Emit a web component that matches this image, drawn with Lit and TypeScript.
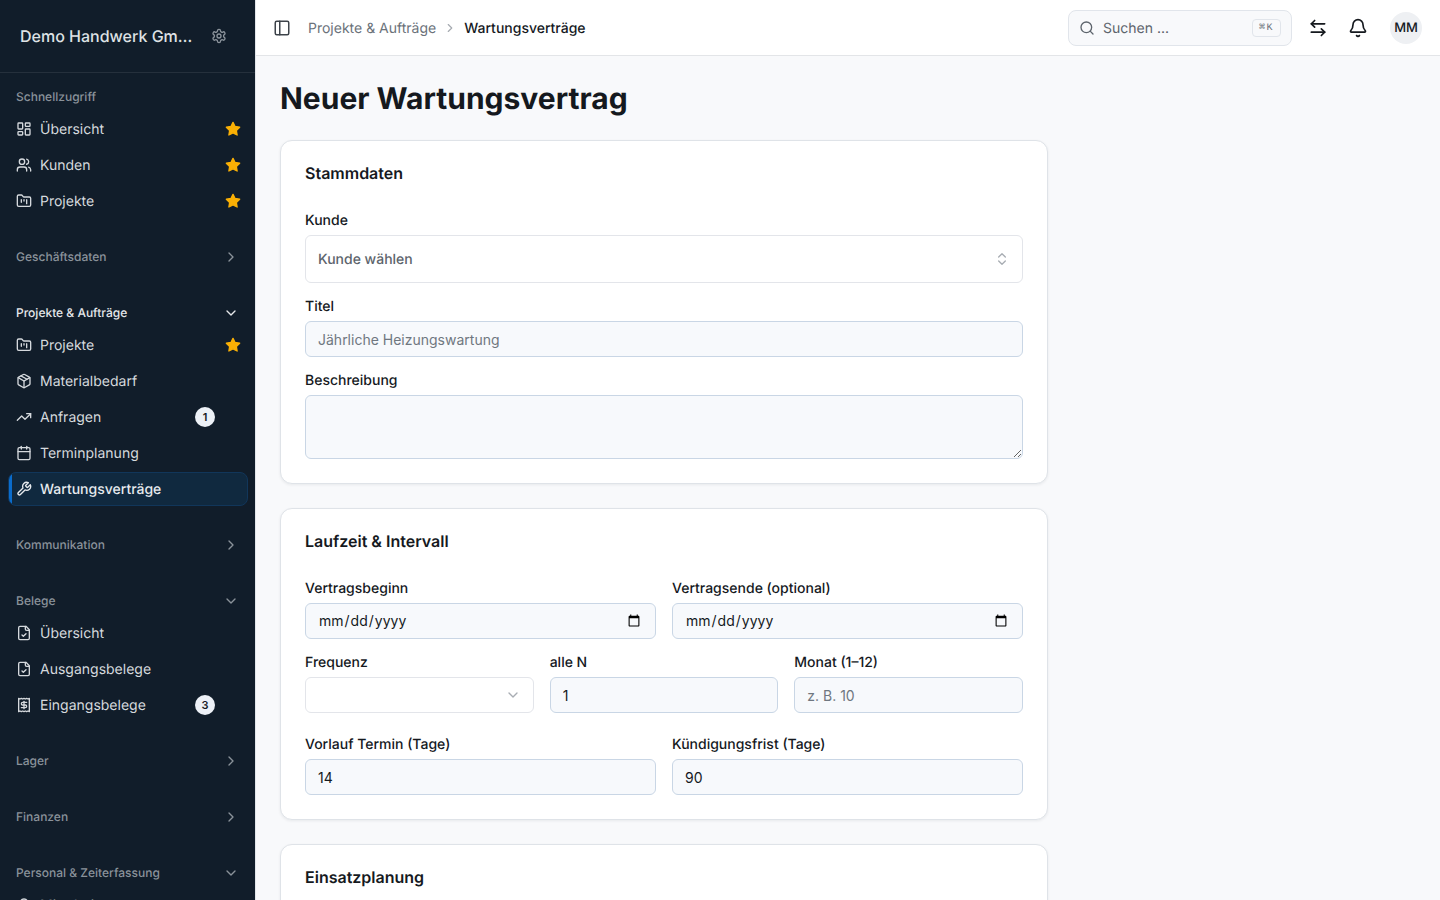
import { LitElement, html, css, svg } from "lit";
import { customElement } from "lit/decorators.js";

const ic: Record<string, unknown> = {
  dash: svg`<rect x="3" y="3" width="7" height="9" rx="1"/><rect x="14" y="3" width="7" height="5" rx="1"/><rect x="14" y="12" width="7" height="9" rx="1"/><rect x="3" y="16" width="7" height="5" rx="1"/>`,
  users: svg`<path d="M16 21v-2a4 4 0 0 0-4-4H6a4 4 0 0 0-4 4v2"/><circle cx="9" cy="7" r="4"/><path d="M22 21v-2a4 4 0 0 0-3-3.87"/><path d="M16 3.13a4 4 0 0 1 0 7.75"/>`,
  folder: svg`<path d="M4 20h16a2 2 0 0 0 2-2V8a2 2 0 0 0-2-2h-7.93a2 2 0 0 1-1.66-.9l-.82-1.2A2 2 0 0 0 7.93 3H4a2 2 0 0 0-2 2v13c0 1.1.9 2 2 2Z"/><path d="M8 10v4"/><path d="M12 10v2"/><path d="M16 10v6"/>`,
  pkg: svg`<path d="m7.5 4.27 9 5.15"/><path d="M21 8a2 2 0 0 0-1-1.73l-7-4a2 2 0 0 0-2 0l-7 4A2 2 0 0 0 3 8v8a2 2 0 0 0 1 1.73l7 4a2 2 0 0 0 2 0l7-4A2 2 0 0 0 21 16Z"/><path d="m3.3 7 8.7 5 8.7-5"/><path d="M12 22V12"/>`,
  trend: svg`<polyline points="22 7 13.5 15.5 8.5 10.5 2 17"/><polyline points="16 7 22 7 22 13"/>`,
  cal: svg`<path d="M8 2v4"/><path d="M16 2v4"/><rect x="3" y="4" width="18" height="18" rx="2"/><path d="M3 10h18"/>`,
  wrench: svg`<path d="M14.7 6.3a1 1 0 0 0 0 1.4l1.6 1.6a1 1 0 0 0 1.4 0l3.77-3.77a6 6 0 0 1-7.94 7.94l-6.91 6.91a2.12 2.12 0 0 1-3-3l6.91-6.91a6 6 0 0 1 7.94-7.94l-3.76 3.76z"/>`,
  filecheck: svg`<path d="M15 2H6a2 2 0 0 0-2 2v16a2 2 0 0 0 2 2h12a2 2 0 0 0 2-2V7Z"/><path d="M14 2v4a2 2 0 0 0 2 2h4"/><path d="m9 15 2 2 4-4"/>`,
  receipt: svg`<path d="M4 2v20l2-1 2 1 2-1 2 1 2-1 2 1 2-1 2 1V2l-2 1-2-1-2 1-2-1-2 1-2-1-2 1Z"/><path d="M16 8h-6a2 2 0 1 0 0 4h4a2 2 0 1 1 0 4H8"/><path d="M12 17.5v-11"/>`,
  gear: svg`<path d="M12.22 2h-.44a2 2 0 0 0-2 2v.18a2 2 0 0 1-1 1.73l-.43.25a2 2 0 0 1-2 0l-.15-.08a2 2 0 0 0-2.73.73l-.22.38a2 2 0 0 0 .73 2.73l.15.1a2 2 0 0 1 1 1.72v.51a2 2 0 0 1-1 1.74l-.15.09a2 2 0 0 0-.73 2.73l.22.38a2 2 0 0 0 2.73.73l.15-.08a2 2 0 0 1 2 0l.43.25a2 2 0 0 1 1 1.73V20a2 2 0 0 0 2 2h.44a2 2 0 0 0 2-2v-.18a2 2 0 0 1 1-1.73l.43-.25a2 2 0 0 1 2 0l.15.08a2 2 0 0 0 2.73-.73l.22-.39a2 2 0 0 0-.73-2.73l-.15-.08a2 2 0 0 1-1-1.74v-.5a2 2 0 0 1 1-1.74l.15-.09a2 2 0 0 0 .73-2.73l-.22-.38a2 2 0 0 0-2.73-.73l-.15.08a2 2 0 0 1-2 0l-.43-.25a2 2 0 0 1-1-1.73V4a2 2 0 0 0-2-2z"/><circle cx="12" cy="12" r="3"/>`,
  panel: svg`<rect x="3" y="3" width="18" height="18" rx="2"/><path d="M9 3v18"/>`,
  search: svg`<circle cx="11" cy="11" r="8"/><path d="m21 21-4.3-4.3"/>`,
  swap: svg`<path d="M8 3 4 7l4 4"/><path d="M4 7h16"/><path d="m16 21 4-4-4-4"/><path d="M20 17H4"/>`,
  bell: svg`<path d="M10.268 21a2 2 0 0 0 3.464 0"/><path d="M3.262 15.326A1 1 0 0 0 4 17h16a1 1 0 0 0 .74-1.673C19.41 13.956 18 12.499 18 8A6 6 0 0 0 6 8c0 4.499-1.411 5.956-2.738 7.326"/>`,
  updown: svg`<path d="m7 15 5 5 5-5"/><path d="m7 9 5-5 5 5"/>`,
  right: svg`<path d="m9 18 6-6-6-6"/>`,
  down: svg`<path d="m6 9 6 6 6-6"/>`,
  star: svg`<polygon points="12 2 15.09 8.26 22 9.27 17 14.14 18.18 21.02 12 17.77 5.82 21.02 7 14.14 2 9.27 8.91 8.26 12 2"/>`,
  userc: svg`<circle cx="12" cy="8" r="5"/><path d="M20 21a8 8 0 0 0-16 0"/>`,
};

const icon = (n: string, size = 16, cls = "", sw = 2) =>
  html`<svg class="i ${cls}" width=${size} height=${size} viewBox="0 0 24 24" fill="none" stroke="currentColor" stroke-width=${sw} stroke-linecap="round" stroke-linejoin="round">${ic[n]}</svg>`;

type Row = { i: string; t: string; star?: boolean; badge?: string; active?: boolean };
type Sec = { t: string; open: boolean; cur?: boolean; noChevron?: boolean; rows?: Row[] };

const sections: Sec[] = [
  { t: "Schnellzugriff", open: true, noChevron: true, rows: [
    { i: "dash", t: "Übersicht", star: true },
    { i: "users", t: "Kunden", star: true },
    { i: "folder", t: "Projekte", star: true },
  ]},
  { t: "Geschäftsdaten", open: false },
  { t: "Projekte & Aufträge", open: true, cur: true, rows: [
    { i: "folder", t: "Projekte", star: true },
    { i: "pkg", t: "Materialbedarf" },
    { i: "trend", t: "Anfragen", badge: "1" },
    { i: "cal", t: "Terminplanung" },
    { i: "wrench", t: "Wartungsverträge", active: true },
  ]},
  { t: "Kommunikation", open: false },
  { t: "Belege", open: true, rows: [
    { i: "filecheck", t: "Übersicht" },
    { i: "filecheck", t: "Ausgangsbelege" },
    { i: "receipt", t: "Eingangsbelege", badge: "3" },
  ]},
  { t: "Lager", open: false },
  { t: "Finanzen", open: false },
  { t: "Personal & Zeiterfassung", open: true, rows: [
    { i: "userc", t: "Mitarbeiter" },
  ]},
];

@customElement("app-root")
export class AppRoot extends LitElement {
  static styles = css`
    :host { display: block; height: 900px; overflow: hidden; font-family: Inter, "Liberation Sans", sans-serif; color: #15191e; text-rendering: geometricPrecision; }
    * { box-sizing: border-box; }
    .i { display: block; flex: none; }
    .shell { display: flex; height: 900px; background: #f8f9fb; }
    .side { width: 256px; flex: none; background: #111d2a; display: flex; flex-direction: column; overflow: hidden; border-right: 1px solid #e3e6ea; }
    .brand { height: 73px; flex: none; display: flex; align-items: center; padding: 0 28px 1px 20px; border-bottom: 1px solid #25303c; gap: 18px; }
    .brand-name { flex: 1; min-width: 0; font-size: 16px; font-weight: 500; color: #dfe2e5; white-space: nowrap; overflow: hidden; text-overflow: ellipsis; }
    .gear { color: #8b939b; }
    .nav { padding: 14px 7px 0 8px; display: flex; flex-direction: column; gap: 28px; }
    .sec { display: flow-root; }
    .sec-head { height: 20px; display: flex; align-items: center; justify-content: space-between; padding: 0 9px 0 8px; font-size: 12px; font-weight: 500; line-height: 20px; color: #8a929a; margin-bottom: 8px; }
    .sec.open .sec-head { margin-bottom: 4px; }
    .sec.cur .sec-head { color: #e6e8ea; }
    .rows { display: flex; flex-direction: column; gap: 2px; padding: 1px 0; }
    .row { height: 34px; display: flex; align-items: center; padding-left: 7px; gap: 8px; border-radius: 8px; font-size: 14px; color: #d5d9dd; border: 1px solid transparent; position: relative; }
    .row .t { flex: 1; }
    .row.active { background: #10293f; border-color: #11365a; color: #e6eaee; overflow: hidden; font-weight: 500; }
    .row.active::before { content: ""; position: absolute; left: -1px; top: -1px; bottom: -1px; width: 4px; background: #0a6ccc; }
    .star { color: #fab005; margin-right: 6px; }
    .badge { width: 20px; height: 20px; border-radius: 50%; background: #edf1f7; color: #15191e; font-size: 11px; font-weight: 600; display: flex; align-items: center; justify-content: center; margin-right: 32px; }
    .main { flex: 1; min-width: 0; display: flex; flex-direction: column; }
    .top { height: 56px; flex: none; background: #fff; border-bottom: 1px solid #e3e5e8; display: flex; align-items: center; padding: 0 18px 0 17px; }
    .top .panel { color: #3d434a; margin-right: 17px; }
    .crumb { font-size: 14px; color: #6b727a; margin-top: 2px; }
    .sep { color: #a6abb1; margin: 0 7px; }
    .crumb-cur { font-size: 14px; font-weight: 500; color: #15191e; margin-top: 2px; }
    .search { margin-left: auto; width: 224px; height: 36px; border: 1px solid #e1e5eb; border-radius: 8px; background: #f8f9fb; display: flex; align-items: center; padding: 0 10px; gap: 8px; color: #5d646c; font-size: 14px; }
    .search .ph { flex: 1; margin-top: 2px; }
    .kbd { width: 29px; height: 18px; border: 1px solid #e1e5eb; border-radius: 4px; font-size: 10px; color: #6b727a; display: flex; align-items: center; justify-content: center; padding-top: 1px; font-family: "Liberation Mono", monospace; letter-spacing: 1.5px; }
    .act { margin-left: 14px; width: 24px; display: flex; justify-content: center; color: #15191e; }
    .act.bell { margin-left: 16px; }
    .avatar { margin-left: 20px; width: 32px; height: 32px; border-radius: 50%; background: #eef0f3; display: flex; align-items: center; justify-content: center; font-size: 13px; font-weight: 500; color: #15191e; }
    .content { padding: 24px; overflow: hidden; flex: 1; }
    h1 { margin: 1px 0 23px; font-size: 30px; line-height: 36px; font-weight: 700; color: #15191e; }
    .card { width: 768px; background: #fff; border: 1px solid #dfe3e8; border-radius: 12px; padding: 24px; margin-bottom: 24px; box-shadow: 0 1px 3px rgba(20, 30, 45, 0.07); }
    h2 { margin: 0 0 28px; font-size: 16px; line-height: 16px; font-weight: 600; color: #15191e; }
    .fields { display: flex; flex-direction: column; gap: 12px; }
    .g2, .g3 { display: grid; gap: 12px 16px; }
    .g2 { grid-template-columns: 1fr 1fr; }
    .g3 { grid-template-columns: 1fr 1fr 1fr; }
    .spaced { margin-top: 8px; }
    label { display: block; font-size: 14px; line-height: 22px; font-weight: 500; margin: 1px 0 3px; color: #15191e; }
    input, textarea, select { display: block; width: 100%; font: inherit; font-size: 14px; color: #15191e; background: #f7f9fc; border: 1px solid #c9d6e5; border-radius: 6px; padding: 0 12px; height: 36px; outline: none; margin: 0; }
    input[type="date"] { padding-bottom: 2px; }
    input::-webkit-calendar-picker-indicator { margin-top: 2px; }
    input::placeholder, textarea::placeholder { color: #6f7780; }
    textarea { height: 64px; padding: 8px 12px; resize: vertical; }
    .wrap { position: relative; }
    .pick { height: 48px; background: #fff; border: 1px solid #e3e5ea; border-radius: 6px; display: flex; align-items: center; justify-content: space-between; padding: 0 12px; font-size: 14px; font-weight: 500; color: #5d646c; }
    .pick .i { color: #a8adb3; }
    select { appearance: none; background: #fff; border-color: #e3e5ea; }
    .wrap .i { position: absolute; right: 13px; top: 10px; color: #a8adb3; pointer-events: none; }
  `;

  render() {
    return html`<div class="shell">
      <aside class="side">
        <div class="brand"><div class="brand-name">Demo Handwerk GmbH</div><span class="gear">${icon("gear", 16)}</span></div>
        <nav class="nav">
          ${sections.map((s) => html`<section class="sec ${s.open ? "open" : ""} ${s.cur ? "cur" : ""}">
            <div class="sec-head"><span>${s.t}</span>${s.noChevron ? "" : icon(s.open ? "down" : "right", 16)}</div>
            ${s.rows ? html`<div class="rows">${s.rows.map((r) => html`<div class="row ${r.active ? "active" : ""}">
              ${icon(r.i, 16)}<span class="t">${r.t}</span>
              ${r.star ? html`<svg class="i star" width="16" height="16" viewBox="0 0 24 24" fill="currentColor" stroke="currentColor" stroke-width="2" stroke-linejoin="round">${ic.star}</svg>` : ""}
              ${r.badge ? html`<span class="badge">${r.badge}</span>` : ""}
            </div>`)}</div>` : ""}
          </section>`)}
        </nav>
      </aside>
      <div class="main">
        <header class="top">
          <span class="panel">${icon("panel", 18)}</span>
          <span class="crumb">Projekte &amp; Aufträge</span>
          <span class="sep">${icon("right", 14)}</span>
          <span class="crumb-cur">Wartungsverträge</span>
          <div class="search">${icon("search", 16)}<span class="ph">Suchen ...</span><span class="kbd">⌘K</span></div>
          <span class="act">${icon("swap", 20)}</span>
          <span class="act bell">${icon("bell", 20)}</span>
          <span class="avatar">MM</span>
        </header>
        <main class="content">
          <h1>Neuer Wartungsvertrag</h1>
          <section class="card">
            <h2>Stammdaten</h2>
            <div class="fields">
              <div><label>Kunde</label><div class="pick"><span>Kunde wählen</span>${icon("updown", 16)}</div></div>
              <div><label>Titel</label><input placeholder="Jährliche Heizungswartung" /></div>
              <div><label>Beschreibung</label><textarea></textarea></div>
            </div>
          </section>
          <section class="card">
            <h2>Laufzeit &amp; Intervall</h2>
            <div class="fields">
              <div class="g2">
                <div><label>Vertragsbeginn</label><input type="date" /></div>
                <div><label>Vertragsende (optional)</label><input type="date" /></div>
              </div>
              <div class="g3">
                <div><label>Frequenz</label><div class="wrap"><select></select>${icon("down", 16)}</div></div>
                <div><label>alle N</label><input value="1" /></div>
                <div><label>Monat (1–12)</label><input placeholder="z. B. 10" /></div>
              </div>
              <div class="g2 spaced">
                <div><label>Vorlauf Termin (Tage)</label><input value="14" /></div>
                <div><label>Kündigungsfrist (Tage)</label><input value="90" /></div>
              </div>
            </div>
          </section>
          <section class="card"><h2>Einsatzplanung</h2></section>
        </main>
      </div>
    </div>`;
  }
}
